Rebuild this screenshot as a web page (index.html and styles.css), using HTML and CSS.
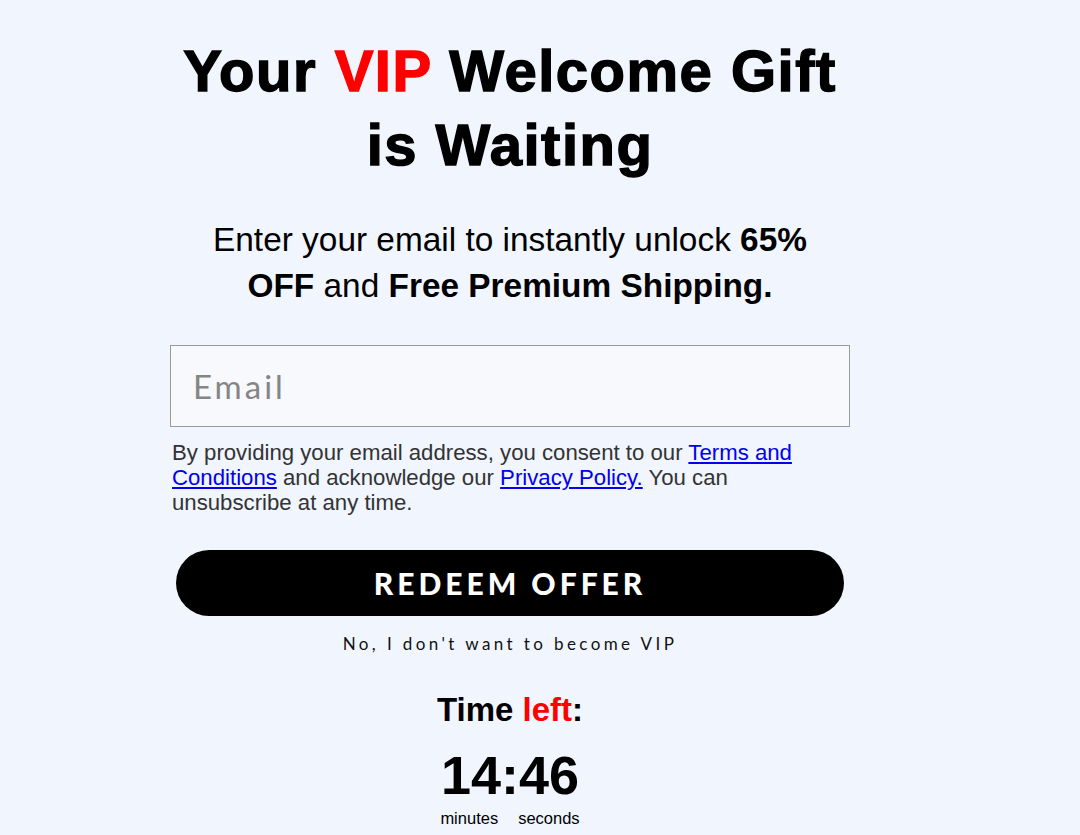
FILE: index.html
```
<!DOCTYPE html>
<html lang="en">
<head>
  <meta charset="UTF-8" />
  <meta name="viewport" content="width=device-width, initial-scale=1.0" />
  <title>VIP Welcome Gift</title>
  <link rel="stylesheet" href="styles.css">
</head>
<body>
  <div class="popup">
    <h1 class="title">Your <span class="red">VIP</span> Welcome Gift is Waiting</h1>

    <p class="lead">Enter your email to instantly unlock <b>65% OFF</b> and <b>Free Premium Shipping.</b></p>

    <form class="signup" onsubmit="return false">
      <input type="email" class="email" placeholder="Email">
      <p class="consent">
        By providing your email address, you consent to our <a href="#">Terms and Conditions</a>
        and acknowledge our <a href="#">Privacy Policy.</a> You can unsubscribe at any time.
      </p>
      <button type="submit" class="redeem">REDEEM OFFER</button>
      <a href="#" class="decline">No, I don't want to become VIP</a>
    </form>

    <div class="timer">
      <div class="timer-title">Time <span class="red">left</span>:</div>
      <div class="timer-value"><span id="mins">14</span>:<span id="secs">46</span></div>
      <div class="timer-labels">
        <span>minutes</span>
        <span>seconds</span>
      </div>
    </div>
  </div>
</body>
</html>
```

FILE: styles.css
```
* {
  box-sizing: border-box;
  margin: 0;
  padding: 0;
}

body {
  font-family: "Liberation Sans", Arial, sans-serif;
  background: #f0f5fe;
  color: #000;
  padding-left: 170px;
}

.popup {
  width: 680px;
  padding-top: 34px;
  text-align: center;
}

.red {
  color: #ff0000;
}

.title {
  font-size: 58px;
  line-height: 74px;
  font-weight: bold;
  letter-spacing: 1.5px;
  -webkit-text-stroke: 1.4px currentColor;
  padding: 0 10px;
}

.lead {
  font-size: 33.4px;
  line-height: 46px;
  margin-top: 35px;
  padding: 0 20px;
}

.signup {
  margin-top: 36px;
  display: flex;
  flex-direction: column;
  align-items: center;
}

.email {
  width: 100%;
  height: 82px;
  border: 1px solid #9a9a9a;
  background: #f7f9fc;
  padding: 0 22px;
  font-family: Lato, "Noto Sans", sans-serif;
  font-size: 33px;
  letter-spacing: 3px;
  color: #333;
  outline: none;
}

.email::placeholder {
  color: #858585;
}

.consent {
  align-self: stretch;
  text-align: left;
  margin-top: 13px;
  padding-left: 2px;
  padding-right: 40px;
  font-size: 22.2px;
  line-height: 25px;
  color: #333;
}

.consent a {
  color: #0000ee;
}

.redeem {
  width: 668px;
  height: 66px;
  margin-top: 35px;
  border: none;
  border-radius: 33px;
  background: #000;
  color: #fff;
  font-family: Lato, "Noto Sans", sans-serif;
  font-weight: 900;
  font-size: 30px;
  letter-spacing: 4px;
  cursor: pointer;
}

.decline {
  margin-top: 17px;
  font-family: Lato, "Noto Sans", sans-serif;
  font-size: 17px;
  line-height: 22px;
  letter-spacing: 3.4px;
  color: #111;
  text-decoration: none;
}

.timer {
  margin-top: 36px;
}

.timer-title {
  font-size: 33px;
  line-height: 38px;
  font-weight: bold;
}

.timer-value {
  margin-top: 20px;
  font-size: 54px;
  line-height: 52px;
  font-weight: bold;
}

.timer-labels {
  display: flex;
  justify-content: center;
  gap: 20px;
  font-size: 16.5px;
  line-height: 18px;
  margin-top: 8px;
}
```
